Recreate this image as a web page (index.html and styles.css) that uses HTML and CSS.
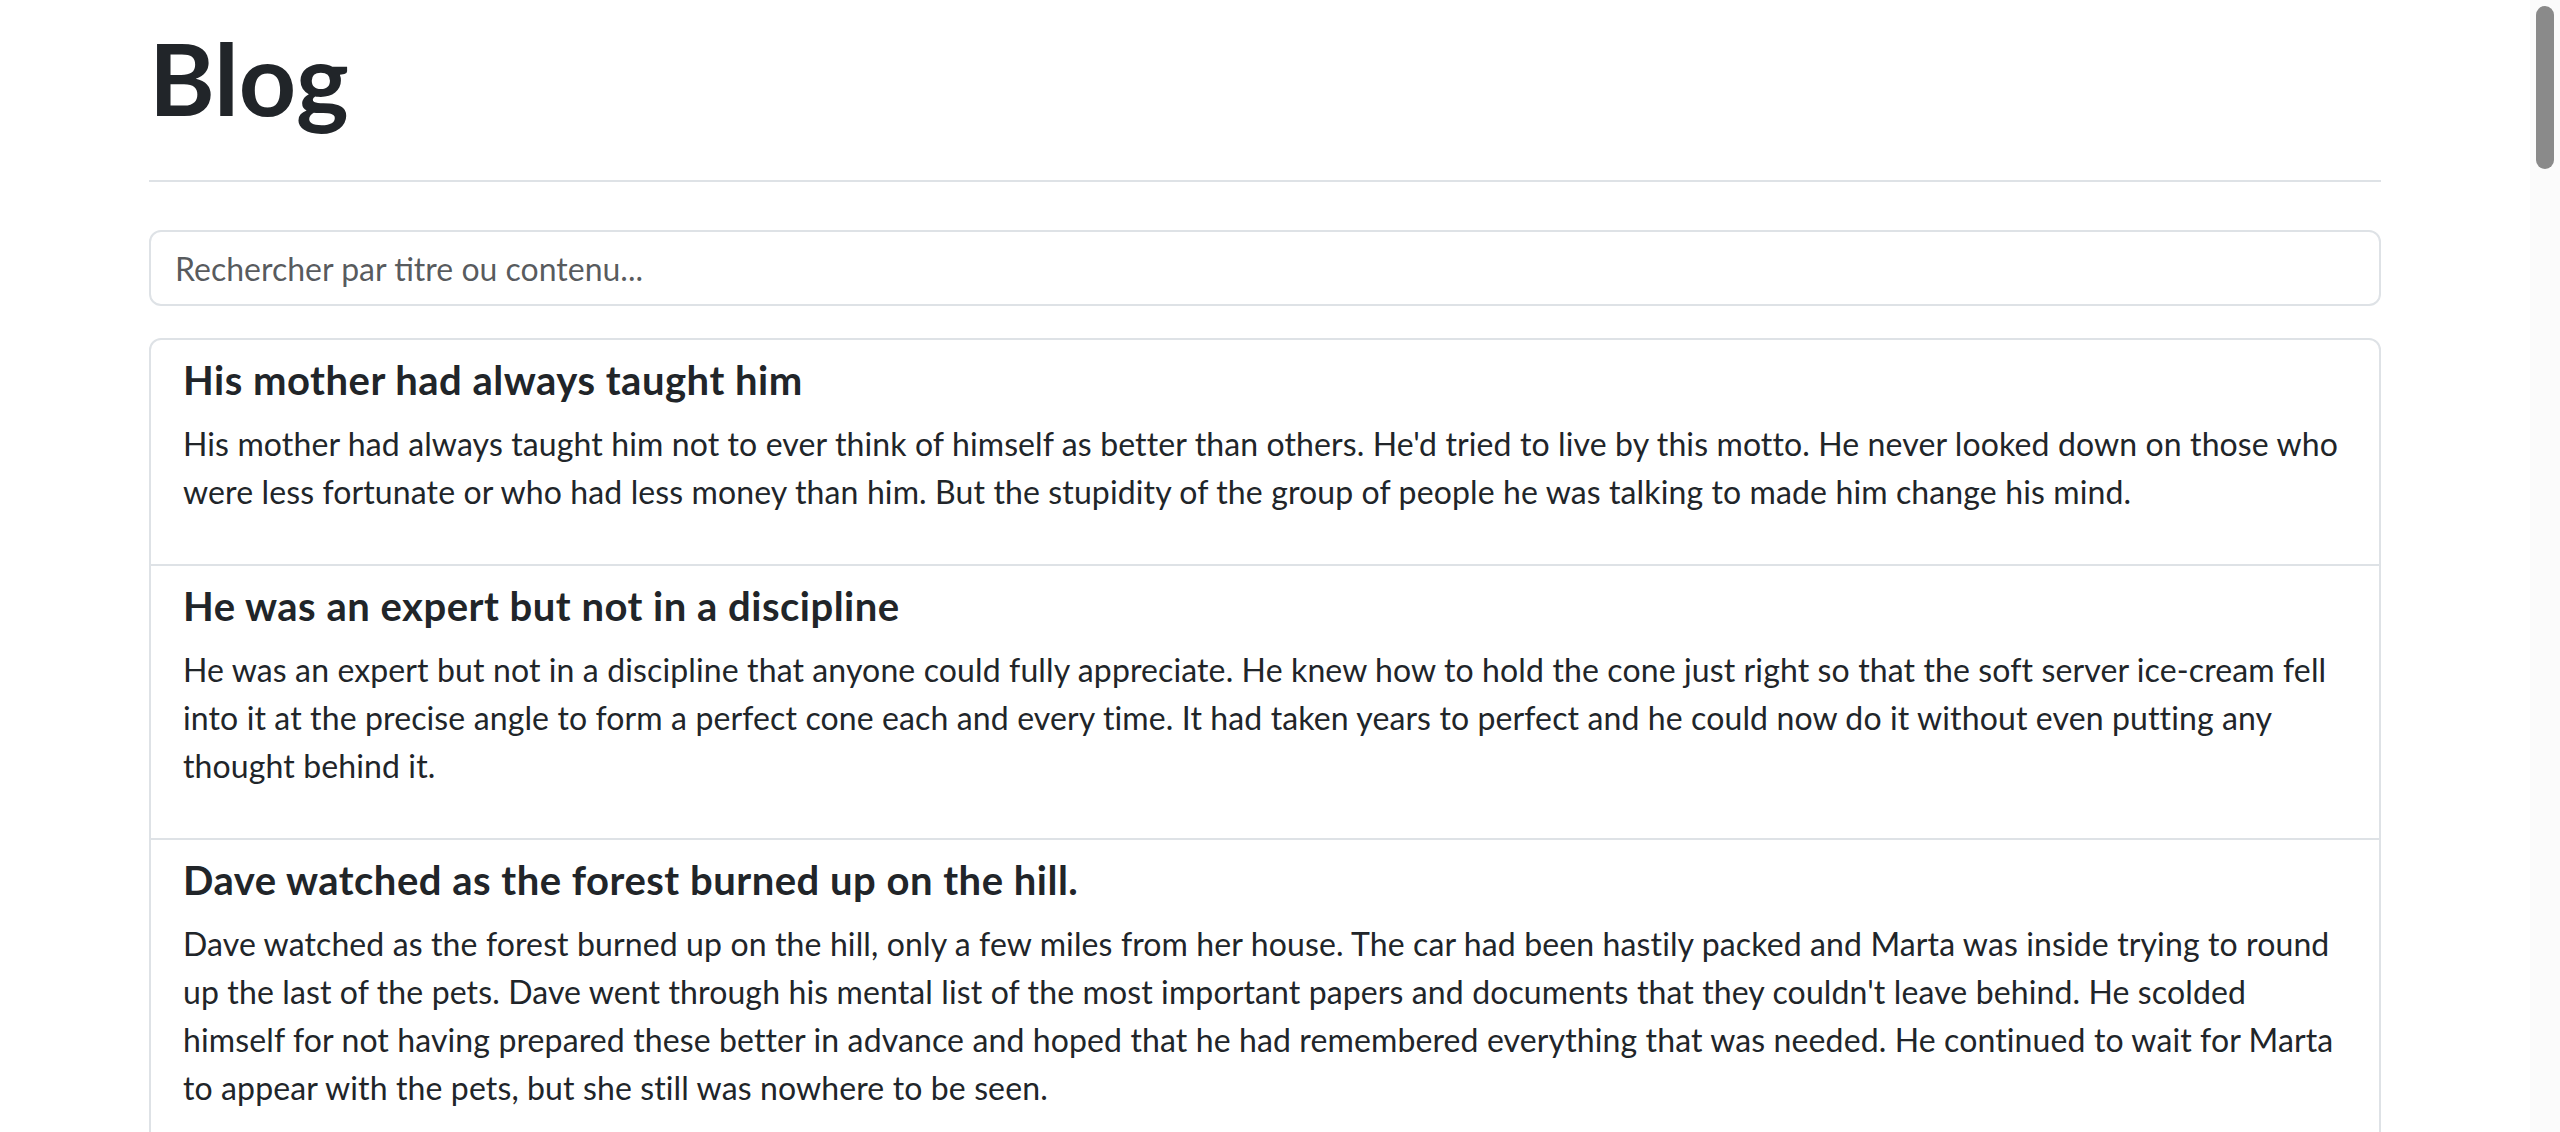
FILE: index.html
```html
<!DOCTYPE html>
<html lang="fr">
<head>
<meta charset="utf-8">
<title>Blog</title>
<link rel="stylesheet" href="styles.css">
</head>
<body>
<div class="viewport">
<main class="main">
<div class="container">
  <header class="page-header">
    <h1 class="page-title">Blog</h1>
  </header>
  <input class="search" type="text" placeholder="Rechercher par titre ou contenu...">
  <div class="post-list">
    <article class="post">
      <h5 class="post-title">His mother had always taught him</h5>
      <p class="post-body">His mother had always taught him not to ever think of himself as better than others. He'd tried to live by this motto. He never looked down on those who were less fortunate or who had less money than him. But the stupidity of the group of people he was talking to made him change his mind.</p>
    </article>
    <article class="post">
      <h5 class="post-title">He was an expert but not in a discipline</h5>
      <p class="post-body">He was an expert but not in a discipline that anyone could fully appreciate. He knew how to hold the cone just right so that the soft server ice-cream fell into it at the precise angle to form a perfect cone each and every time. It had taken years to perfect and he could now do it without even putting any thought behind it.</p>
    </article>
    <article class="post">
      <h5 class="post-title">Dave watched as the forest burned up on the hill.</h5>
      <p class="post-body">Dave watched as the forest burned up on the hill, only a few miles from her house. The car had been hastily packed and Marta was inside trying to round up the last of the pets. Dave went through his mental list of the most important papers and documents that they couldn't leave behind. He scolded himself for not having prepared these better in advance and hoped that he had remembered everything that was needed. He continued to wait for Marta to appear with the pets, but she still was nowhere to be seen.</p>
    </article>
    <article class="post">
      <h5 class="post-title">All he wanted was a candy bar.</h5>
      <p class="post-body">All he wanted was a candy bar. It didn't seem like a difficult request to comprehend, but the clerk remained frozen and didn't seem to want to honor the request. It might have had something to do with the gun pointed at his face.</p>
    </article>
    <article class="post">
      <h5 class="post-title">Hopes and dreams were dashed that day.</h5>
      <p class="post-body">Hopes and dreams were dashed that day. It should have been expected, but it still came as a shock. The warning signs had been ignored in favor of the possibility, however remote, that it could actually happen. That possibility had grown from hope to an undeniable belief it must be destiny. That was until it wasn't and the hopes and dreams came crashing down.</p>
    </article>
    <article class="post">
      <h5 class="post-title">Dave wasn't exactly sure how he had ended up</h5>
      <p class="post-body">Dave wasn't exactly sure how he had ended up in this predicament. He ran through all the events that had lead to this current situation and it still didn't make sense. He wanted to spend some time to try and make sense of it all, but he had higher priorities at the moment. The first was how to get out of his current situation of being naked in a tree with snow falling all around and no way for him to get down.</p>
    </article>
    <article class="post">
      <h5 class="post-title">This is important to remember.</h5>
      <p class="post-body">This is important to remember. Love isn't like pie. You don't need to divide it among all your friends and loved ones. No matter how much love you give, you can always give more. It doesn't run out, so don't try to hold back giving it as if it may one day run out. Give it freely and as much as you want.</p>
    </article>
    <article class="post">
      <h5 class="post-title">One can cook on and with an open fire.</h5>
      <p class="post-body">One can cook on and with an open fire. These are some of the ways to cook with fire outside. Cooking meat using a spit is a great way to evenly cook meat. In order to keep meat from burning, it's best to slowly rotate it.</p>
    </article>
    <article class="post">
      <h5 class="post-title">There are different types of secrets.</h5>
      <p class="post-body">There are different types of secrets. She had held onto plenty of them during her life, but this one was different. She found herself holding onto the worst type. It was the type of secret that could gnaw away at your insides if you didn't tell someone about it, but it could end up getting you killed if you did.</p>
    </article>
    <article class="post">
      <h5 class="post-title">They rushed out the door.</h5>
      <p class="post-body">They rushed out the door, grabbing anything and everything they could think of they might need. There was no time to double-check to make sure they weren't leaving something important behind. Everything was thrown into the car and they sped off. Thirty minutes later they were safe and that was when it dawned on them that they had forgotten the most important thing of all.</p>
    </article>
    <article class="post">
      <h5 class="post-title">The paper was blank.</h5>
      <p class="post-body">The paper was blank. It shouldn't have been. There should have been writing on the paper, at least some sort of writing. If there was writing, that would have been helpful. But there wasn't any writing, and that made the whole situation far more complicated than it needed to be.</p>
    </article>
    <article class="post">
      <h5 class="post-title">So what is the goal of all of this?</h5>
      <p class="post-body">So what is the goal of all of this? Nobody seemed able to give a straight answer. Everyone had an opinion, and every opinion pointed in a different direction, which only made the question harder to answer the longer they talked about it.</p>
    </article>
    <article class="post">
      <h5 class="post-title">Sometimes it's simply better to ignore the haters.</h5>
      <p class="post-body">Sometimes it's simply better to ignore the haters. That's the lesson that Tom's dad had been trying to teach him, but Tom still couldn't let it go. He latched onto the haters and their comments and spent far too much time worrying about what they said.</p>
    </article>
    <article class="post">
      <h5 class="post-title">There was only one way to do this.</h5>
      <p class="post-body">There was only one way to do this and it would take every ounce of courage that she had. She took a deep breath, looked one last time at the path behind her and stepped forward without looking back.</p>
    </article>
    <article class="post">
      <h5 class="post-title">The urge to buy another bike</h5>
      <p class="post-body">The urge to buy another bike was strong. He already owned three, but each one served a very specific purpose and none of them was quite right for the long trip he had been planning all winter.</p>
    </article>
    <article class="post">
      <h5 class="post-title">She was in a hurry.</h5>
      <p class="post-body">She was in a hurry. Not the standard hurry when you're in a rush to get someplace, but a frantic hurry. The type of hurry where a few seconds could mean life or death. She raced down the road ignoring speed limits and weaving between cars.</p>
    </article>
    <article class="post">
      <h5 class="post-title">It was difficult for Mary to admit</h5>
      <p class="post-body">It was difficult for Mary to admit that most of her workout consisted of exercising poor judgment. She knew that she should be doing better, but she continued to make the same choices day after day.</p>
    </article>
    <article class="post">
      <h5 class="post-title">He was aware there were numerous wonders of this world</h5>
      <p class="post-body">He was aware there were numerous wonders of this world including the unexplained creations of humankind that showed the wonder of our ingenuity. There are huge heads on Easter Island. There are the Egyptian pyramids. There's Stonehenge. But he now stood in front of a newly discovered monument that simply didn't make any sense.</p>
    </article>
    <article class="post">
      <h5 class="post-title">Debbie knew she was being selfish and unreasonable.</h5>
      <p class="post-body">Debbie knew she was being selfish and unreasonable. She understood why the others in the room were angry and frustrated with her and the way she was acting. In her eyes, it didn't really matter how they felt because she simply didn't care.</p>
    </article>
    <article class="post">
      <h5 class="post-title">Although Dave hadn't known his father well</h5>
      <p class="post-body">Although Dave hadn't known his father well, he still felt the loss deeply. There were so many questions he had never asked, and now there would never be a chance to hear the answers.</p>
    </article>
    <article class="post">
      <h5 class="post-title">Was it enough?</h5>
      <p class="post-body">Was it enough? That was the question he kept asking himself. Was being satisfied with what he had enough, or should he keep striving for more? He couldn't decide which answer he truly believed.</p>
    </article>
    <article class="post">
      <h5 class="post-title">She looked at her student</h5>
      <p class="post-body">She looked at her student wondering if she could ever get through. "You need to learn to think for yourself," she wanted to tell him. "Your friends are holding you back and bringing you down." But she didn't because she knew his friends were all that he had.</p>
    </article>
    <article class="post">
      <h5 class="post-title">The rain was coming.</h5>
      <p class="post-body">The rain was coming. Everyone thought this would be a good thing. It hadn't rained in months and the earth was dry as a bone. It wasn't a surprise that everyone thought this was a good thing, but they hadn't thought about what came with it.</p>
    </article>
    <article class="post">
      <h5 class="post-title">The house was old.</h5>
      <p class="post-body">The house was old. It wasn't just old in the sense that it had been built a long time ago, but it carried the weight of every family that had lived inside its walls over the past century.</p>
    </article>
    <article class="post">
      <h5 class="post-title">It was a rather simple thing</h5>
      <p class="post-body">It was a rather simple thing to do, or at least that's what everyone kept telling him. Yet every time he tried, something went wrong and he found himself starting over again from the very beginning.</p>
    </article>
    <article class="post">
      <h5 class="post-title">The trees swayed in the wind.</h5>
      <p class="post-body">The trees swayed in the wind, their branches scraping against the windows of the small cabin. She pulled the blanket tighter around her shoulders and tried to ignore the sound.</p>
    </article>
    <article class="post">
      <h5 class="post-title">Nobody expected the letter.</h5>
      <p class="post-body">Nobody expected the letter to arrive that morning. It had been lost for years, and its sudden appearance on the kitchen table raised more questions than anyone in the family was ready to answer.</p>
    </article>
    <article class="post">
      <h5 class="post-title">The bridge was closed.</h5>
      <p class="post-body">The bridge was closed for repairs, which meant the only way across the river was the old ferry. It ran twice a day, and if you missed it, you would be waiting until the next morning.</p>
    </article>
    <article class="post">
      <h5 class="post-title">He had never seen the ocean.</h5>
      <p class="post-body">He had never seen the ocean before. Standing on the sand, he watched the waves roll in and felt smaller than he had ever felt in his life, and yet strangely at peace.</p>
    </article>
    <article class="post">
      <h5 class="post-title">The last train left at midnight.</h5>
      <p class="post-body">The last train left at midnight, and she was determined to be on it. Her bags were packed, her ticket was in her pocket, and there was nothing left in this town to hold her back.</p>
    </article>
  </div>
</div>
</main>
<aside class="scrollbar" aria-hidden="true">
  <div class="scrollbar-thumb"></div>
</aside>
</div>
</body>
</html>
```

FILE: styles.css
```css
html {
  background: #ffffff;
}

body {
  margin: 0;
  font-family: Lato, "Noto Sans", sans-serif;
  font-size: 32px;
  line-height: 1.5;
  color: #212529;
  background: #ffffff;
}

.viewport {
  display: flex;
  align-items: stretch;
}

.main {
  flex: 1 1 auto;
  min-width: 0;
}

.scrollbar {
  flex: 0 0 30px;
  width: 30px;
  background: #fbfbfb;
  display: flex;
  flex-direction: column;
  align-items: center;
}

.scrollbar-thumb {
  width: 18px;
  height: 163px;
  margin-top: 6px;
  background: #8a8a8a;
  border-radius: 9px;
}

.container {
  width: 2232px;
  margin: 0 auto;
}

.page-header {
  padding-top: 17px;
  padding-bottom: 43px;
  border-bottom: 2px solid #dee2e6;
}

.page-title {
  margin: 0;
  font-size: 100px;
  line-height: 1.2;
  font-weight: 700;
}

.search {
  display: block;
  box-sizing: border-box;
  width: 100%;
  height: 76px;
  margin-top: 48px;
  padding: 12px 24px;
  font-family: inherit;
  font-size: 32px;
  line-height: 1.5;
  color: #212529;
  background: #ffffff;
  border: 2px solid #dee2e6;
  border-radius: 12px;
  outline: none;
}

.search::placeholder {
  color: rgba(33, 37, 41, 0.75);
}

.post-list {
  display: flex;
  flex-direction: column;
  margin-top: 32px;
  margin-bottom: 32px;
  border: 2px solid #dee2e6;
  border-radius: 12px;
}

.post {
  padding: 16px 32px;
  border-top: 2px solid #dee2e6;
}

.post:first-child {
  border-top: 0;
}

.post-title {
  margin: 0 0 16px;
  font-size: 40px;
  line-height: 1.2;
  font-weight: 700;
  letter-spacing: 0.5px;
}

.post-body {
  margin: 0 0 32px;
  letter-spacing: 0.12px;
}
```
